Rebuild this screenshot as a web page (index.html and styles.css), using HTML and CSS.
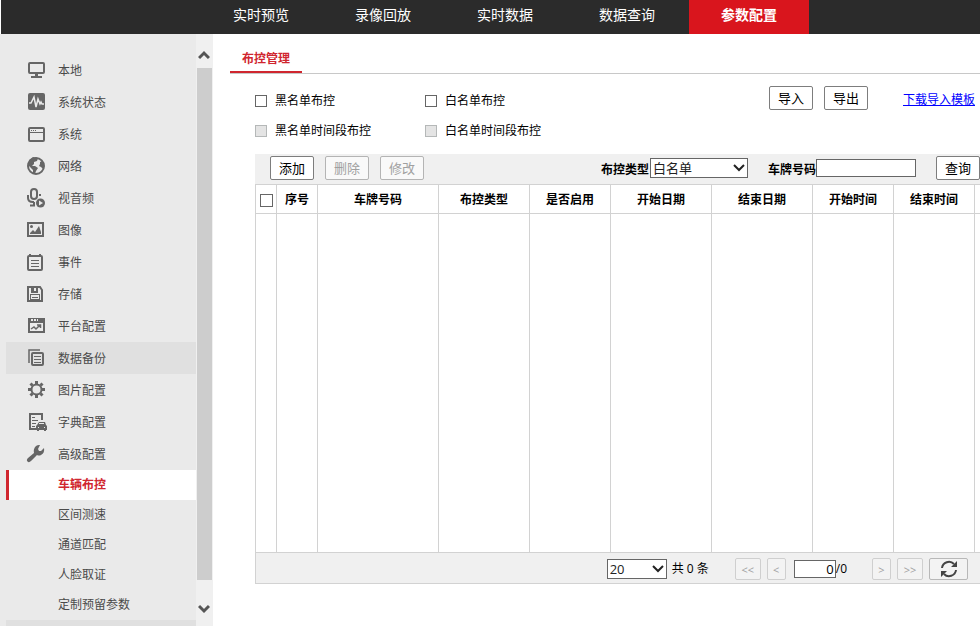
FILE: index.html
```html
<!DOCTYPE html>
<html lang="zh-CN">
<head>
  <meta charset="UTF-8">
  <meta name="viewport" content="width=device-width, initial-scale=1.0">
  <title>参数配置</title>
  <link rel="stylesheet" href="styles.css">
</head>
<body>

  <!-- 顶部导航 -->
  <nav class="topnav">
    <a href="#">实时预览</a>
    <a href="#">录像回放</a>
    <a href="#">实时数据</a>
    <a href="#">数据查询</a>
    <a href="#" class="active">参数配置</a>
  </nav>

  <div class="page">
    <!-- 左侧菜单 -->
    <aside class="sidebar">
      <ul class="menu">
        <li><a href="#">
          <svg class="icon" viewBox="0 0 22 20"><rect class="line" x="3" y="3" width="15" height="10" rx="1"/><path d="M9 14h3v2h4v2H5v-2h4z"/></svg>
          本地</a></li>
        <li><a href="#">
          <svg class="icon" viewBox="0 0 22 20"><rect x="2" y="1" width="17" height="17" rx="2"/><path class="wave" d="M3 11h2l3-6 2 10 2-8 2 5 1-2 1 2h2"/></svg>
          系统状态</a></li>
        <li><a href="#">
          <svg class="icon" viewBox="0 0 22 20"><rect class="line" x="3" y="4" width="15" height="13" rx="1"/><path d="M4 8h13v1H4zM5 6h1v1H5zM7 6h1v1H7zM9 6h1v1H9z"/></svg>
          系统</a></li>
        <li><a href="#">
          <svg class="icon" viewBox="0 0 22 20"><circle class="line" cx="10" cy="10" r="8"/><path d="M2 9l1-5 4-3 5 1-1 3-3 1v2l-2 2h3l3 2-2 3-1 3-2-1v-3l-3-3zM14 6l2-1 2 4-1 4-2-2-2-1 1-2z"/></svg>
          网络</a></li>
        <li><a href="#">
          <svg class="icon" viewBox="0 0 22 20"><rect class="line" x="5" y="1" width="6" height="10" rx="3"/><path class="line" d="M2 7v3q0 4 5 4h1M14 6v2M8 14v3M4 17.500h5"/><circle cx="14.500" cy="15" r="4.500"/><path class="hole" d="M13 12.500l4 2.500-4 2.500z"/></svg>
          视音频</a></li>
        <li><a href="#">
          <svg class="icon" viewBox="0 0 22 20"><rect class="line" x="2" y="3" width="15" height="13"/><path d="M4 14v-1l3-3 2 2 4-6 2 6v2z"/><circle cx="5.500" cy="6.500" r="1.500"/></svg>
          图像</a></li>
        <li><a href="#">
          <svg class="icon" viewBox="0 0 22 20"><rect class="line" x="2" y="4" width="14" height="14" rx="1"/><path d="M3 2h2v3H3zM13 2h2v3h-2zM5 8h8v1H5zM5 11h8v1H5zM5 14h8v1H5z"/></svg>
          事件</a></li>
        <li><a href="#">
          <svg class="icon" viewBox="0 0 22 20"><path class="line" d="M2 3h12l2 3v11H2z"/><path d="M5 3h7v6H5zM4 10h10v1H4zM4 10h1v7H4zM13 10h1v7h-1zM6 13h6v1H6zM4 15h10v1H4z"/><path class="hole" d="M8 4h2v3H8z"/></svg>
          存储</a></li>
        <li><a href="#">
          <svg class="icon" viewBox="0 0 22 20"><rect class="line" x="3" y="3" width="15" height="13"/><path d="M3 3h15v4H3z"/><path class="hole" d="M5 3h2v2H5zM8 3h2v2H8zM11 3h1v2h-1z"/><path class="thin" d="M5 13l3-2 2 2 4-4M11 9h3.500v3"/></svg>
          平台配置</a></li>
        <li class="hover"><a href="#">
          <svg class="icon" viewBox="0 0 22 20"><path class="thin" d="M3 15V2h11"/><rect class="line" x="6" y="5" width="11" height="12" rx="1"/><path d="M8 8h7v1H8zM8 11h7v1H8zM8 14h7v1H8z"/></svg>
          数据备份</a></li>
        <li><a href="#">
          <svg class="icon" viewBox="0 0 22 20"><circle class="line" cx="10.500" cy="9.500" r="5"/><path class="teeth" d="M10.500 1v3M10.500 15v3M2 9.500h3M16 9.500h3M4.500 3.500l2 2M14.500 13.500l2 2M16.500 3.500l-2 2M6.500 13.500l-2 2"/></svg>
          图片配置</a></li>
        <li><a href="#">
          <svg class="icon" viewBox="0 0 22 20"><path class="line" d="M10 17H4V2h12v6"/><path d="M6 5h3v1H6zM6 8h6v1H6zM6 11h4v1H6zM6 14h3v1H6z"/><path d="M13 10h6l1 3 1 1v4h-1v1h-2v-1h-5v1h-2v-1h-1v-4l1-1z"/><path class="hole" d="M13 11h5v1h-5zM12 15h1v1h-1zM18 15h1v1h-1z"/></svg>
          字典配置</a></li>
        <li><a href="#">
          <svg class="icon" viewBox="0 0 22 20"><path d="M14 1l-2 4 1 2 2 0 3-3q1 5-3 7-2 1-4 0l-6 6q-2 2-3.500 .500T2 14l6-5q-1-4 2-7 2-1.500 4-1z"/></svg>
          高级配置</a></li>
      </ul>
      <ul class="submenu">
        <li class="active"><a href="#">车辆布控</a></li>
        <li><a href="#">区间测速</a></li>
        <li><a href="#">通道匹配</a></li>
        <li><a href="#">人脸取证</a></li>
        <li><a href="#">定制预留参数</a></li>
      </ul>
      <div class="menu-next"></div>
    </aside>

    <div class="scrollbar">
      <button type="button" class="scroll-up" aria-label="向上">
        <svg viewBox="0 0 12 10"><path d="M1 8l5-5 5 5"/></svg>
      </button>
      <div class="thumb"></div>
      <button type="button" class="scroll-down" aria-label="向下">
        <svg viewBox="0 0 12 10"><path d="M1 2l5 5 5-5"/></svg>
      </button>
    </div>

    <!-- 布控管理 -->
    <main class="content">
      <div class="tabs">
        <a href="#" class="tab">布控管理</a>
      </div>

      <div class="options">
        <div class="checks">
          <div class="check"><input type="checkbox" id="black"><label for="black">黑名单布控</label></div>
          <div class="check"><input type="checkbox" id="white"><label for="white">白名单布控</label></div>
          <div class="check"><input type="checkbox" id="blackTime" disabled><label for="blackTime">黑名单时间段布控</label></div>
          <div class="check"><input type="checkbox" id="whiteTime" disabled><label for="whiteTime">白名单时间段布控</label></div>
        </div>
        <div class="transfer">
          <button type="button" class="btn">导入</button>
          <button type="button" class="btn">导出</button>
          <a href="#" class="template">下载导入模板</a>
        </div>
      </div>

      <div class="toolbar">
        <div class="actions">
          <button type="button" class="btn">添加</button>
          <button type="button" class="btn" disabled>删除</button>
          <button type="button" class="btn" disabled>修改</button>
        </div>
        <div class="search">
          <label for="type">布控类型</label>
          <span class="select type-select">
            <select id="type">
              <option>白名单</option>
              <option>黑名单</option>
            </select>
            <svg class="arrow" viewBox="0 0 12 8"><path d="M1 1l5 5 5-5"/></svg>
          </span>
          <label for="plate" class="plate-label">车牌号码</label>
          <input type="text" id="plate" class="text plate">
          <button type="button" class="btn query">查询</button>
        </div>
      </div>

      <div class="grid">
        <table>
          <colgroup>
            <col class="c-check"><col class="c-num"><col class="c-plate"><col class="c-type"><col class="c-time">
            <col class="c-date"><col class="c-date"><col class="c-time"><col class="c-time"><col>
          </colgroup>
          <thead>
            <tr>
              <th><input type="checkbox" aria-label="全选"></th>
              <th>序号</th>
              <th>车牌号码</th>
              <th>布控类型</th>
              <th>是否启用</th>
              <th>开始日期</th>
              <th>结束日期</th>
              <th>开始时间</th>
              <th>结束时间</th>
              <th></th>
            </tr>
          </thead>
          <tbody>
            <tr><td></td><td></td><td></td><td></td><td></td><td></td><td></td><td></td><td></td><td></td></tr>
          </tbody>
        </table>
      </div>

      <div class="pager">
        <span class="select size-select">
          <select aria-label="每页条数">
            <option>20</option>
            <option>50</option>
          </select>
          <svg class="arrow" viewBox="0 0 12 8"><path d="M1 1l5 5 5-5"/></svg>
        </span>
        <span class="total">共 0 条</span>
        <div class="pages">
          <button type="button" class="page-btn wide" disabled>&lt;&lt;</button>
          <button type="button" class="page-btn" disabled>&lt;</button>
        </div>
        <div class="jump">
          <input type="text" class="text page-no" value="0" aria-label="页码"><span>/0</span>
        </div>
        <div class="pages">
          <button type="button" class="page-btn" disabled>&gt;</button>
          <button type="button" class="page-btn wide" disabled>&gt;&gt;</button>
          <button type="button" class="page-btn refresh" aria-label="刷新">
            <svg viewBox="0 0 18 18"><path class="arc" d="M2 8a7 7 0 0 1 12-4M16 10a7 7 0 0 1-12 4"/><path d="M17 1v6h-6zM1 17v-6h6z"/></svg>
          </button>
        </div>
      </div>
    </main>
  </div>

</body>
</html>
```
FILE: styles.css
```css
* {
  box-sizing: border-box;
}

body {
  margin: 0;
  height: 100vh;
  display: flex;
  flex-direction: column;
  overflow: hidden;
  background: #fff;
  color: #000;
  font-family: "Open Sans", "Noto Sans CJK SC", sans-serif;
  font-size: 12px;
  line-height: 18px;
}

ul {
  margin: 0;
  padding: 0;
  list-style: none;
}

a {
  text-decoration: none;
}

input,
select,
button {
  margin: 0;
  font-family: inherit;
}

/* 顶部导航 */
.topnav {
  flex: none;
  display: flex;
  gap: 2px;
  height: 34px;
  margin-left: 1px;
  padding-left: 200px;
  background: #2b2b2b;
}

.topnav a {
  width: 120px;
  padding-bottom: 4px;
  color: #fff;
  font-size: 14px;
  line-height: 30px;
  text-align: center;
}

.topnav .active {
  background: #d9151d;
  font-weight: bold;
}

.page {
  flex: 1;
  display: flex;
  min-height: 0;
}

/* 左侧菜单 */
.sidebar {
  flex: none;
  width: 196px;
  padding: 20px 0 0 6px;
  background: #eaeaea;
  overflow: hidden;
}

.sidebar a {
  display: flex;
  align-items: center;
  height: 100%;
  color: #4a4a4a;
}

.menu li {
  height: 32px;
  padding-left: 20px;
}

.menu a {
  gap: 10px;
  padding-top: 2px;
}

.menu .hover,
.menu-next {
  background: #e0e0e0;
}

.menu-next {
  height: 32px;
}

.icon {
  width: 22px;
  height: 20px;
  margin-bottom: 2px;
  fill: #666;
}

.icon .line,
.icon .thin,
.icon .teeth,
.icon .wave {
  fill: none;
  stroke: #666;
  stroke-width: 2;
}

.icon .thin {
  stroke-width: 1.5;
}

.icon .teeth {
  stroke-width: 3;
}

.icon .wave {
  stroke: #eaeaea;
  stroke-width: 1.5;
}

.icon .hole {
  fill: #eaeaea;
}

.submenu li {
  height: 30px;
  padding-left: 49px;
  border-left: 3px solid transparent;
}

.submenu .active {
  background: #fff;
  border-left-color: #d0262f;
}

.submenu .active a {
  color: #d0262f;
  font-weight: bold;
}

/* 滚动条 */
.scrollbar {
  flex: none;
  display: flex;
  flex-direction: column;
  width: 17px;
  background: #f0f0f0;
}

.scrollbar button {
  display: flex;
  justify-content: center;
  align-items: flex-end;
  padding: 0 1px 8px 0;
  border: none;
  background: none;
}

.scrollbar svg {
  width: 12px;
  height: 10px;
  fill: none;
  stroke: #555;
  stroke-width: 3;
}

.scroll-up {
  height: 34px;
}

.scrollbar .scroll-down {
  height: 46px;
  padding-bottom: 12px;
}

.thumb {
  flex: 1;
  margin: 0 1px;
  background: #cdcdcd;
}

/* 内容区 */
.content {
  flex: 1;
  display: flex;
  flex-direction: column;
  min-width: 0;
  padding: 10px 0 42px 42px;
}

.tabs {
  display: flex;
  height: 30px;
  margin-left: -25px;
  border-bottom: 1px solid #c8c8c8;
}

.tab {
  padding: 0 12px;
  border-bottom: 2px solid #d0262f;
  color: #d0262f;
  font-weight: bold;
  line-height: 30px;
}

.options {
  display: flex;
  justify-content: space-between;
  align-items: flex-start;
  height: 80px;
  padding: 12px 5px 0 0;
}

.checks {
  display: grid;
  grid-template-columns: 170px auto;
  grid-auto-rows: 30px;
}

.check {
  display: flex;
  align-items: center;
  gap: 8px;
}

input[type="checkbox"] {
  appearance: none;
  width: 12px;
  height: 12px;
  border: 1px solid #666;
  background: #fff;
}

input[type="checkbox"]:disabled {
  border-color: #b5b8b8;
  background: #e4e4e4;
}

.transfer {
  display: flex;
  align-items: center;
  gap: 11px;
}

.template {
  margin-left: 24px;
  padding-top: 4px;
  color: #00f;
  text-decoration: underline;
}

.btn {
  width: 44px;
  height: 24px;
  padding: 0;
  border: 1px solid #7d7d7d;
  border-radius: 2px;
  background: #fff;
  color: #000;
  font-size: 13px;
  line-height: 20px;
}

.btn:disabled {
  border-color: #b4b4b4;
  background: #f9f9f9;
  color: #a0a0a0;
}

.toolbar {
  display: flex;
  justify-content: space-between;
  align-items: center;
  height: 30px;
  padding: 0 0 2px 15px;
  background: #f0f0f0;
}

.actions {
  display: flex;
  gap: 11px;
}

.search {
  display: flex;
  align-items: center;
  font-weight: bold;
}

.search label {
  padding-top: 4px;
}

.select {
  position: relative;
  display: flex;
}

.select select {
  appearance: none;
  width: 100%;
  height: 20px;
  padding: 0 2px;
  border: 1px solid #666;
  border-radius: 0;
  background: #fff;
  color: #222;
  font-size: 13px;
}

.arrow {
  position: absolute;
  top: 6px;
  right: 3px;
  width: 12px;
  height: 8px;
  fill: none;
  stroke: #222;
  stroke-width: 2;
  pointer-events: none;
}

.type-select {
  width: 98px;
  margin-left: 1px;
}

.plate-label {
  margin-left: 20px;
}

.text {
  height: 18px;
  padding: 0 1px;
  border: 1px solid #666;
  background: #fff;
  font-size: 13px;
}

.plate {
  width: 100px;
}

.query {
  margin-left: 20px;
}

/* 表格 */
.grid {
  flex: 1;
  min-height: 0;
}

table {
  width: 100%;
  height: 100%;
  table-layout: fixed;
  border-spacing: 0;
}

th,
td {
  padding: 0;
  border-left: 1px solid #d2d2d2;
}

th {
  height: 30px;
  padding-top: 2px;
  border-top: 1px solid #d2d2d2;
  border-bottom: 1px solid #d2d2d2;
}

th input[type="checkbox"] {
  display: block;
  width: 13px;
  height: 13px;
  margin: 0 auto;
}

.c-check { width: 21px; }
.c-num { width: 41px; }
.c-plate { width: 121px; }
.c-type { width: 91px; }
.c-time { width: 81px; }
.c-date { width: 101px; }

/* 分页 */
.pager {
  display: flex;
  justify-content: flex-end;
  align-items: center;
  height: 32px;
  padding: 2px 12px 0 0;
  border: solid #d2d2d2;
  border-width: 1px 0 1px 1px;
  background: #f0f0f0;
}

.size-select {
  width: 60px;
}

.total {
  margin: 0 26px 0 5px;
}

.pages {
  display: flex;
  gap: 6px;
}

.page-btn {
  display: flex;
  align-items: center;
  justify-content: center;
  width: 19px;
  height: 22px;
  padding: 0;
  border: 1px solid #cfcfcf;
  border-radius: 2px;
  background: #f3f3f3;
  font-size: 11px;
}

.page-btn:disabled {
  color: #a0a0a0;
}

.wide {
  width: 26px;
}

.refresh {
  width: 39px;
  border-color: #b8b8b8;
}

.refresh svg {
  width: 18px;
  height: 18px;
  fill: #444;
}

.refresh .arc {
  fill: none;
  stroke: #444;
  stroke-width: 2;
}

.jump {
  display: flex;
  align-items: center;
  margin: 0 25px 0 8px;
}

.page-no {
  width: 42px;
  text-align: right;
}
```
